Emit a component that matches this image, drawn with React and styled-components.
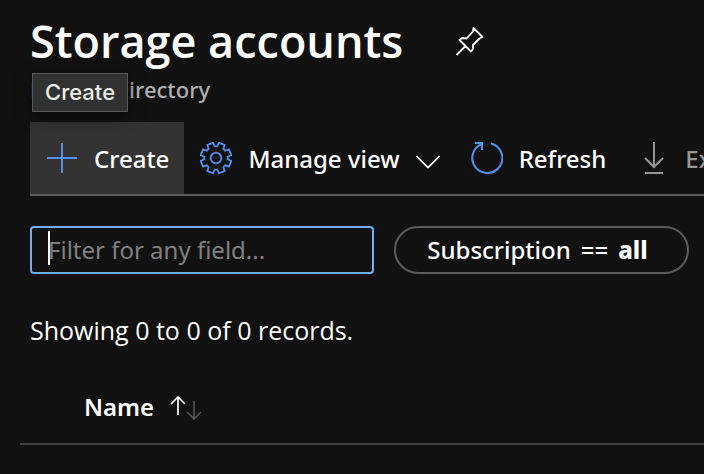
import React from "react";
import styled, { createGlobalStyle } from "styled-components";

const GlobalStyle = createGlobalStyle`
  * { box-sizing: border-box; }
  body {
    margin: 0;
    background: #111111;
    color: #ffffff;
    font-family: "Noto Sans", "Open Sans", sans-serif;
    font-size: 24px;
    font-weight: 500;
    overflow: hidden;
  }
  button, input { font: inherit; color: inherit; }
`;

const Page = styled.main`
  padding-top: 10px;
`;

const Header = styled.header`
  position: relative;
  padding-left: 30px;
`;

const TitleRow = styled.div`
  display: flex;
  align-items: center;
  gap: 52px;
  height: 62px;
`;

const Title = styled.h1`
  margin: 0;
  font-family: "Open Sans", "Noto Sans", sans-serif;
  font-size: 45px;
  line-height: 60px;
  font-weight: 600;
  white-space: nowrap;
`;

const PinButton = styled.button`
  display: flex;
  padding: 0;
  border: 0;
  background: none;
`;

const Directory = styled.p`
  margin: 0;
  font-size: 22px;
  line-height: 34px;
  color: #b0b0b0;
`;

const Tooltip = styled.div`
  position: absolute;
  left: 32px;
  top: 63px;
  padding: 0 12px;
  border: 1px solid #575959;
  background: #303231;
  box-shadow: 0 4px 16px rgba(0, 0, 0, 0.5);
  color: #ececec;
  font-family: Inter, sans-serif;
  font-size: 22px;
  line-height: 37px;
`;

const Toolbar = styled.div`
  display: flex;
  margin: 16px 0 0 30px;
  border-bottom: 2px solid #5c5c5c;
  overflow: hidden;
`;

const Command = styled.button`
  display: flex;
  flex: none;
  align-items: center;
  gap: 16px;
  height: 72px;
  padding: 0 15px 0 16px;
  border: 0;
  background: ${(p) => (p.$active ? "#333333" : "none")};
  color: ${(p) => (p.$muted ? "#969696" : "#ffffff")};
  white-space: nowrap;

  svg { flex: none; }
`;

const Filters = styled.div`
  display: grid;
  grid-template-columns: minmax(0, 344fr) minmax(0, 295fr);
  gap: 20px;
  padding: 30px 15px 0 30px;
`;

const SearchField = styled.label`
  position: relative;
  min-width: 0;
`;

const SearchInput = styled.input`
  display: block;
  width: 100%;
  height: 48px;
  padding: 0 16px 2px;
  border: 2px solid #6cb0f8;
  border-radius: 4px;
  outline: 0;
  background: #111111;
  font-weight: 400;

  &::placeholder { color: #808080; opacity: 1; }
`;

const Caret = styled.span`
  position: absolute;
  left: 18px;
  top: 5px;
  width: 2px;
  height: 34px;
  background: #ffffff;
`;

const FilterPill = styled.button`
  display: flex;
  align-items: center;
  justify-content: center;
  gap: 10px;
  height: 48px;
  padding: 0 8px 2px 0;
  border: 2px solid #5c5c5c;
  border-radius: 24px;
  background: none;
  white-space: nowrap;

  b { font-weight: 800; }
`;

const Summary = styled.p`
  margin: 0;
  padding: 38px 30px 0;
  font-family: "Open Sans", "Noto Sans", sans-serif;
  font-size: 25px;
  line-height: 36px;
`;

const TableArea = styled.div`
  padding: 26px 0 0 20px;
`;

const Table = styled.table`
  width: 100%;
  border-collapse: collapse;
`;

const HeaderCell = styled.th`
  height: 70px;
  padding: 0 64px 4px;
  border-bottom: 2px solid #3f3f3f;
  text-align: left;
`;

const SortButton = styled.button`
  display: flex;
  align-items: center;
  gap: 16px;
  padding: 0;
  border: 0;
  background: none;
  font-weight: 600;
`;

const PinIcon = () => (
  <svg width="30" height="30" viewBox="0 0 30 30" fill="none" stroke="#fff" strokeWidth="1.8" strokeLinejoin="round" aria-hidden="true">
    <path d="M18.500 2 27.500 11 24.500 12.500 18 19 18 23 16 25.500 4.500 14 7 12 11.500 12.500 18 5.500ZM10.500 20 1.500 29" />
  </svg>
);

const PlusIcon = () => (
  <svg width="32" height="32" viewBox="0 0 32 32" stroke="#5490f0" strokeWidth="2" aria-hidden="true">
    <path d="M1 16H31M16 1V31" />
  </svg>
);

const gearPoints = Array.from({ length: 8 }, (_, i) => {
  const middle = (i * 45 + 22.5) * (Math.PI / 180);
  return [
    [-0.28, 11.8],
    [-0.2, 15.6],
    [0.2, 15.6],
    [0.28, 11.8],
  ].map(([offset, radius]) =>
    `${(16 + radius * Math.cos(middle + offset)).toFixed(1)},${(16 + radius * Math.sin(middle + offset)).toFixed(1)}`
  ).join(" ");
}).join(" ");

const GearIcon = () => (
  <svg width="32" height="32" viewBox="0 0 32 32" fill="none" stroke="#5490f0" strokeWidth="1.8" aria-hidden="true">
    <polygon points={gearPoints} />
    <circle cx="16" cy="16" r="5.3" />
  </svg>
);

const ChevronIcon = () => (
  <svg width="24" height="24" viewBox="0 0 24 24" fill="none" stroke="#fff" strokeWidth="1.7" aria-hidden="true">
    <path d="M.5 10 12 21.500 23.500 10" />
  </svg>
);

const RefreshIcon = () => (
  <svg width="32" height="32" viewBox="0 0 32 32" fill="none" stroke="#5490f0" strokeWidth="2" aria-hidden="true">
    <path d="M20 1.500A15 15 0 1 1 11 2" />
    <path d="M4 1H11V8" />
  </svg>
);

const DownloadIcon = () => (
  <svg width="32" height="32" viewBox="0 0 32 32" fill="none" stroke="#969696" strokeWidth="2" aria-hidden="true">
    <path d="M17 0V25M8 16 17 25 26 16M8 31H26" />
  </svg>
);

const SortIcon = () => (
  <svg width="32" height="26" viewBox="0 0 32 26" fill="none" strokeWidth="1.700" aria-hidden="true">
    <path stroke="#fff" d="M8 21V3M1 10 8 3 15 10" />
    <path stroke="#555" d="M24 7V25M17 18 24 25 31 18" />
  </svg>
);

export default function App() {
  return (
    <>
      <GlobalStyle />
      <Page>
        <Header>
          <TitleRow>
            <Title>Storage accounts</Title>
            <PinButton type="button" aria-label="Pin"><PinIcon /></PinButton>
          </TitleRow>
          <Directory>Default Directory</Directory>
          <Tooltip role="tooltip">Create</Tooltip>
        </Header>
        <Toolbar role="toolbar">
          <Command type="button" $active><PlusIcon />Create</Command>
          <Command type="button"><GearIcon />Manage view<ChevronIcon /></Command>
          <Command type="button"><RefreshIcon />Refresh</Command>
          <Command type="button" $muted><DownloadIcon />Export to CSV</Command>
        </Toolbar>
        <Filters>
          <SearchField>
            <SearchInput type="text" aria-label="Filter" placeholder="Filter for any field..." />
            <Caret />
          </SearchField>
          <FilterPill type="button"><span>Subscription</span><span>==</span><b>all</b></FilterPill>
        </Filters>
        <Summary>Showing 0 to 0 of 0 records.</Summary>
        <TableArea>
          <Table>
            <thead>
              <tr>
                <HeaderCell scope="col">
                  <SortButton type="button">Name<SortIcon /></SortButton>
                </HeaderCell>
              </tr>
            </thead>
          </Table>
        </TableArea>
      </Page>
    </>
  );
}
